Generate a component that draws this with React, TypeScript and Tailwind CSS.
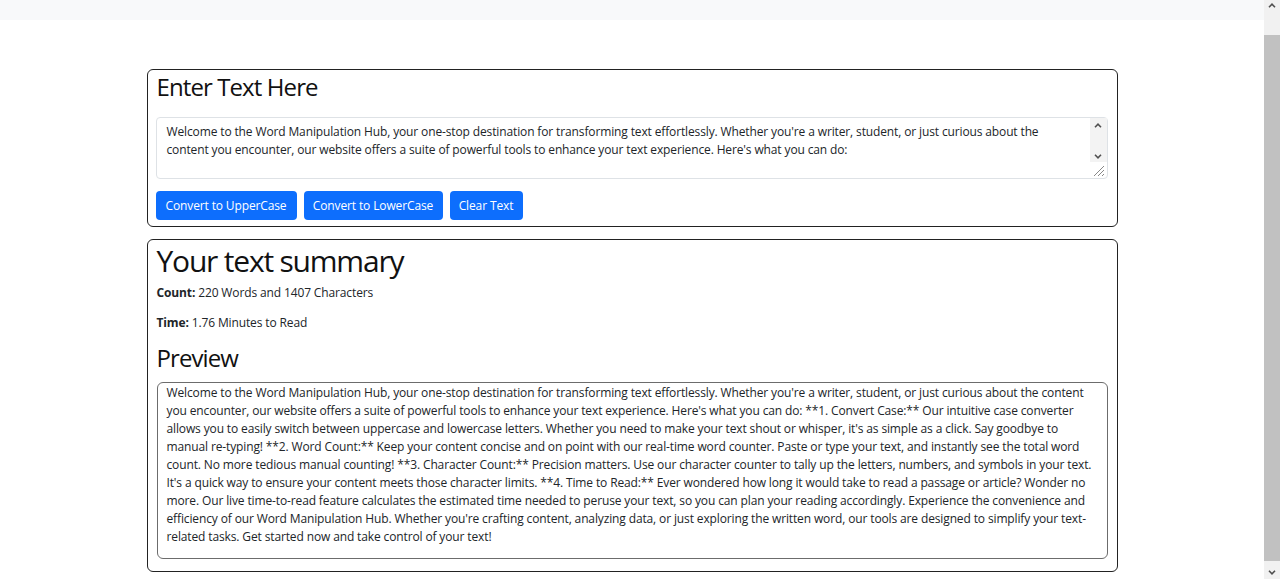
import React from "react";

const taLines = [
  "Welcome to the Word Manipulation Hub, your one-stop destination for transforming text effortlessly. Whether you're a writer, student, or just curious about the",
  "content you encounter, our website offers a suite of powerful tools to enhance your text experience. Here's what you can do:",
];

const pvLines = [
  "Welcome to the Word Manipulation Hub, your one-stop destination for transforming text effortlessly. Whether you're a writer, student, or just curious about the content",
  "you encounter, our website offers a suite of powerful tools to enhance your text experience. Here's what you can do: **1. Convert Case:** Our intuitive case converter",
  "allows you to easily switch between uppercase and lowercase letters. Whether you need to make your text shout or whisper, it's as simple as a click. Say goodbye to",
  "manual re-typing! **2. Word Count:** Keep your content concise and on point with our real-time word counter. Paste or type your text, and instantly see the total word",
  "count. No more tedious manual counting! **3. Character Count:** Precision matters. Use our character counter to tally up the letters, numbers, and symbols in your text.",
  "It's a quick way to ensure your content meets those character limits. **4. Time to Read:** Ever wondered how long it would take to read a passage or article? Wonder no",
  "more. Our live time-to-read feature calculates the estimated time needed to peruse your text, so you can plan your reading accordingly. Experience the convenience and",
  "efficiency of our Word Manipulation Hub. Whether you're crafting content, analyzing data, or just exploring the written word, our tools are designed to simplify your text-",
  "related tasks. Get started now and take control of your text!",
];

function ChevUp({ className }: { className?: string }) {
  return (
    <svg width="8" height="5" viewBox="0 0 8 5" className={className}>
      <path d="M1 4.2 L4 1.2 L7 4.2" fill="none" stroke="#505050" strokeWidth="1.6" />
    </svg>
  );
}
function ChevDown({ className }: { className?: string }) {
  return (
    <svg width="8" height="5" viewBox="0 0 8 5" className={className}>
      <path d="M1 0.8 L4 3.8 L7 0.8" fill="none" stroke="#505050" strokeWidth="1.6" />
    </svg>
  );
}

export default function App() {
  return (
    <div className="flex h-[579px] w-[1280px] overflow-hidden bg-white font-['Open_Sans',sans-serif] text-[12px] leading-[18px] tracking-[-0.13px] text-[#212529]">
      <div className="flex flex-1 flex-col">
        <div className="h-[20px] bg-[#f8f9fa]" />
        <div className="mx-auto mt-[49px] w-[971px]">
          {/* Box 1 */}
          <div className="rounded-[6px] border border-[#222] pl-[8px] pr-[9px] pb-[6px] pt-[2px]">
            <h3 className="mb-[16px] pl-[1px] text-[24px] leading-[29px] font-normal tracking-[-0.9px] text-[#111]">Enter Text Here</h3>
            <div className="flex h-[62px] rounded-[4px] border border-[#dee2e6]">
              <div className="flex-1 pl-[10px] pt-[5px] whitespace-nowrap">
                {taLines.map((l, i) => (
                  <div key={i}>{l}</div>
                ))}
              </div>
              <div className="flex w-[17px] flex-col">
                <div className="flex flex-1 flex-col items-center bg-[#f3f3f3] pt-[5px]">
                  <ChevUp />
                  <div className="flex-1" />
                  <ChevDown className="mb-[3px]" />
                </div>
                <div className="flex h-[16px] items-end justify-end pr-[2px] pb-[1px]">
                  <svg width="13" height="13" viewBox="0 0 13 13">
                    <path d="M12 2 L2 12 M12 6 L6 12 M12 10 L10 12" stroke="#888" strokeWidth="1" />
                  </svg>
                </div>
              </div>
            </div>
            <div className="mt-[12px] flex gap-[7px]">
              <button className="h-[29px] w-[141px] rounded-[4px] bg-[#0d6efd] pt-[1px] text-[12px] text-white">Convert to UpperCase</button>
              <button className="h-[29px] w-[139px] rounded-[4px] bg-[#0d6efd] pt-[1px] text-[12px] text-white">Convert to LowerCase</button>
              <button className="h-[29px] w-[73px] rounded-[4px] bg-[#0d6efd] pt-[1px] text-[12px] text-white">Clear Text</button>
            </div>
          </div>

          {/* Box 2 */}
          <div className="mt-[12px] rounded-[6px] border border-[#222] px-[9px] pb-[12px] pt-[3px]">
            <h1 className="mb-[5px] text-[30px] leading-[36px] font-normal tracking-[-1.2px] text-[#111]">Your text summary</h1>
            <p className="mb-[12px]"><b>Count:</b> 220 Words and 1407 Characters</p>
            <p className="mb-[11px]"><b>Time:</b> 1.76 Minutes to Read</p>
            <h3 className="mb-[10px] text-[24px] leading-[29px] font-normal tracking-[-0.9px] text-[#111]">Preview</h3>
            <div className="rounded-[6px] border-[1.5px] border-[#6c6c6c] px-[9px] pb-[12px] pt-[1px] whitespace-nowrap">
              {pvLines.map((l, i) => (
                <div key={i}>{l}</div>
              ))}
            </div>
          </div>
        </div>
      </div>
      {/* page scrollbar */}
      <div className="flex w-[16px] flex-col items-center bg-[#f1f1f1]">
        <ChevUp className="mt-[3px]" />
        <div className="mt-[27px] h-[526px] w-full bg-[#c1c1c1]" />
        <div className="flex-1" />
        <ChevDown className="mb-[4px]" />
      </div>
    </div>
  );
}
